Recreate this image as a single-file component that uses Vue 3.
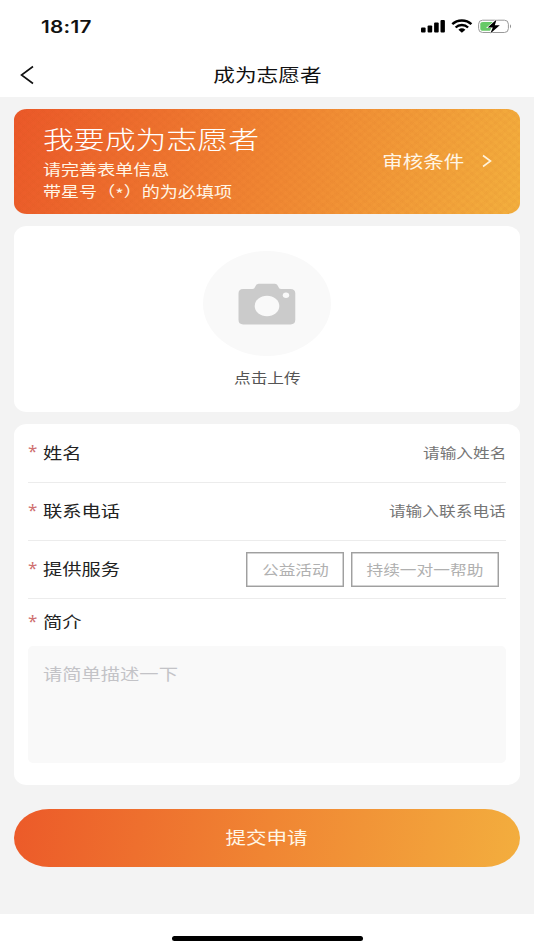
<script setup>
import { ref } from 'vue'

const fields = [
  { label: '姓名', placeholder: '请输入姓名' },
  { label: '联系电话', placeholder: '请输入联系电话' },
]
const services = ref([
  { name: '公益活动', kind: 'short' },
  { name: '持续一对一帮助', kind: 'long' },
])
</script>

<template>
  <div class="page">
    <header class="status">
      <span class="wide time">18:17</span>
      <svg class="indicators" width="92" height="16" viewBox="0 0 92 16">
        <g fill="#000">
          <rect x="1" y="9.5" width="4.6" height="5" rx="1" />
          <rect x="7.6" y="7.5" width="4.6" height="7" rx="1" />
          <rect x="14.1" y="4.6" width="4.6" height="9.9" rx="1" />
          <rect x="20.5" y="2" width="4.4" height="12.5" rx="1" />
        </g>
        <g fill="none" stroke="#000" stroke-width="2.4">
          <path d="M32.3 6.2 C37.5 1.2 46.2 1.2 51.4 6.2" />
          <path d="M35.6 9.5 C39 6.2 44.7 6.2 48.1 9.5" />
        </g>
        <path d="M38.4 11.7 Q41.9 9 45.4 11.7 L41.9 14.7 Z" fill="#000" />
        <rect x="58.6" y="2.2" width="29.8" height="12.3" rx="4" fill="#fff" stroke="#999" />
        <path d="M63 4 H74 L70 12.8 H63 Q60.3 12.8 60.3 10.5 V6.3 Q60.3 4 63 4" fill="#67c967" />
        <path d="M90 6.2 Q92 8.2 90 10.4 Z" fill="#888" />
        <path d="M76.6 1.4 L67.6 9.4 H72.8 L70.3 15.4 L79.8 7.2 H74.8 Z" fill="#000" stroke="#fff" stroke-width="1.2" paint-order="stroke" />
      </svg>
    </header>

    <nav class="nav">
      <svg class="back" width="14" height="20" viewBox="0 0 14 20">
        <path d="M13 1.5 L1.5 10 L13 18.5" fill="none" stroke="#111" stroke-width="1.6" />
      </svg>
      <h1 class="wide center title">成为志愿者</h1>
    </nav>

    <main class="body">
      <section class="banner">
        <div class="intro">
          <h2 class="wide heading">我要成为志愿者</h2>
          <p class="wide line">请完善表单信息</p>
          <p class="wide line">带星号（<span class="mark">*</span>）的为必填项</p>
        </div>
        <a class="review">
          <span class="wide right">审核条件</span>
          <svg width="10" height="14" viewBox="0 0 10 14">
            <path d="M1 1.5 L8.5 7 L1 12.5" fill="none" stroke="#fff3dc" stroke-width="1.6" />
          </svg>
        </a>
      </section>

      <section class="card upload">
        <div class="avatar">
          <svg width="58" height="42" viewBox="0 0 58 42">
            <path
              d="M5 6 H14.5 Q16.5 6 17.3 3.5 Q18.2 .8 20.5 .8 H37 Q39.4 .8 40.2 3.5 Q41 6 43 6 H52.5 Q57.3 6 57.3 10.5 V36.8 Q57.3 41.4 52.5 41.4 H5.2 Q.5 41.4 .5 36.8 V10.5 Q.5 6 5 6"
              fill="#cbcbcb"
            />
            <ellipse cx="29" cy="23" rx="12.3" ry="10.3" fill="#f9f9f9" />
            <ellipse cx="48" cy="12.2" rx="3.2" ry="2.7" fill="#f9f9f9" />
          </svg>
        </div>
        <span class="wide center caption">点击上传</span>
      </section>

      <section class="card form">
        <div v-for="f in fields" :key="f.label" class="row">
          <span class="star">*</span>
          <label class="wide label">{{ f.label }}</label>
          <span class="wide right hint">{{ f.placeholder }}</span>
        </div>
        <div class="row">
          <span class="star">*</span>
          <label class="wide label">提供服务</label>
          <div class="chips">
            <button v-for="s in services" :key="s.name" class="chip" :class="s.kind">
              <span class="wide center">{{ s.name }}</span>
            </button>
          </div>
        </div>
        <div class="row about">
          <span class="star">*</span>
          <label class="wide label">简介</label>
        </div>
        <div class="textarea"><span class="wide">请简单描述一下</span></div>
      </section>

      <button class="submit"><span class="wide center">提交申请</span></button>
    </main>

    <footer class="home"><div class="bar"></div></footer>
  </div>
</template>

<style>
body {
  margin: 0;
  background: #fff;
}
</style>

<style scoped>
.page {
  width: 534px;
  height: 950px;
  overflow: hidden;
  display: flex;
  flex-direction: column;
  background: #fff;
  color: #222;
  font-family: "Noto Sans CJK SC", sans-serif;
}
h1, h2, p {
  margin: 0;
  font-weight: 400;
}
button {
  padding: 0;
  font-family: inherit;
  border: 0;
}
.wide {
  display: inline-block;
  white-space: nowrap;
  transform: scaleX(1.22);
  transform-origin: left center;
}
.wide.center {
  transform-origin: center;
}
.wide.right {
  transform-origin: right center;
}
.status {
  height: 52px;
  box-sizing: border-box;
  padding: 0 22px 0 41px;
  display: flex;
  align-items: center;
  justify-content: space-between;
}
.time {
  padding-top: 1px;
  font: 600 17px/20px Inter, sans-serif;
  letter-spacing: 0.2px;
  color: #111;
}
.nav {
  height: 45px;
  padding: 0 20px;
  display: grid;
  grid-template-columns: 20px 1fr 20px;
  align-items: center;
}
.title {
  justify-self: center;
  padding-bottom: 2px;
  font-size: 17.8px;
  line-height: 26px;
  color: #111;
}
.body {
  height: 816.5px;
  box-sizing: border-box;
  padding: 12px 14px 0;
  background: #f3f3f3;
  display: flex;
  flex-direction: column;
}
.banner {
  height: 105px;
  box-sizing: border-box;
  padding: 12px 28px 0 29px;
  border-radius: 13px / 11px;
  display: flex;
  justify-content: space-between;
  color: #fff6e6;
  background:
    repeating-linear-gradient(40deg, rgba(190, 80, 20, 0.035) 0 3px, transparent 3px 6px),
    repeating-linear-gradient(-40deg, rgba(190, 80, 20, 0.035) 0 3px, transparent 3px 6px),
    linear-gradient(107deg, #eb5829 0%, #f08532 50%, #f3b03e 100%);
}
.intro {
  display: flex;
  flex-direction: column;
  align-items: flex-start;
}
.heading {
  padding-bottom: 3px;
  font-size: 25.3px;
  font-weight: 300;
  line-height: 34px;
  color: #fff;
}
.line {
  font-size: 14.8px;
  line-height: 22px;
}
.mark {
  display: inline-block;
  line-height: 10px;
  vertical-align: -3px;
}
.review {
  height: 80px;
  display: flex;
  align-items: center;
  gap: 18px;
  font-size: 16.8px;
}
.card {
  margin-top: 12px;
  background: #fff;
  border-radius: 13px / 11px;
}
.upload {
  height: 186.4px;
  box-sizing: border-box;
  padding-top: 25px;
  display: flex;
  flex-direction: column;
  align-items: center;
}
.avatar {
  width: 128px;
  height: 105px;
  border-radius: 50%;
  background: #f9f9f9;
  display: flex;
  align-items: center;
  justify-content: center;
}
.caption {
  margin-top: 11px;
  font-size: 13.7px;
  line-height: 20px;
  color: #555;
}
.form {
  height: 361px;
  box-sizing: border-box;
  padding: 0 14px;
}
.row {
  height: 58.2px;
  box-sizing: border-box;
  border-bottom: 1px solid #ececec;
  display: flex;
  align-items: center;
}
.star {
  width: 15px;
  padding-bottom: 3px;
  font: 17px/20px "Noto Sans", sans-serif;
  color: #cf7070;
}
.label {
  font-size: 15.8px;
  line-height: 24px;
}
.hint {
  margin-left: auto;
  padding-bottom: 2px;
  font-size: 13.7px;
  color: #757575;
}
.chips {
  margin-left: auto;
  padding: 1px 7px 0 0;
  display: flex;
  gap: 7px;
}
.chip {
  height: 35px;
  box-sizing: border-box;
  padding-bottom: 2px;
  border: 1px solid #a0a0a0;
  box-shadow: inset 0 0 0 0.5px #a8a8a8;
  background: #fff;
  font-size: 13.7px;
  color: #b0b0b0;
}
.chip.short {
  width: 98px;
}
.chip.long {
  width: 148px;
}
.about {
  height: 47px;
  border: 0;
}
.textarea {
  height: 116.6px;
  box-sizing: border-box;
  padding: 16px 15px;
  border-radius: 5px;
  background: #f9f9f9;
  font-size: 15.8px;
  line-height: 24px;
  color: #c3c3c7;
}
.submit {
  flex-shrink: 0;
  height: 58px;
  margin-top: 23.6px;
  padding-bottom: 2px;
  border-radius: 35px / 29px;
  background: linear-gradient(100deg, #ec5a29 0%, #f08533 50%, #f3ae3e 100%);
  font-size: 16.8px;
  color: #fff6e6;
}
.home {
  flex: 1;
  display: flex;
  justify-content: center;
  padding-top: 22.4px;
}
.bar {
  width: 191px;
  height: 5px;
  border-radius: 3px;
  background: #000;
}
</style>
